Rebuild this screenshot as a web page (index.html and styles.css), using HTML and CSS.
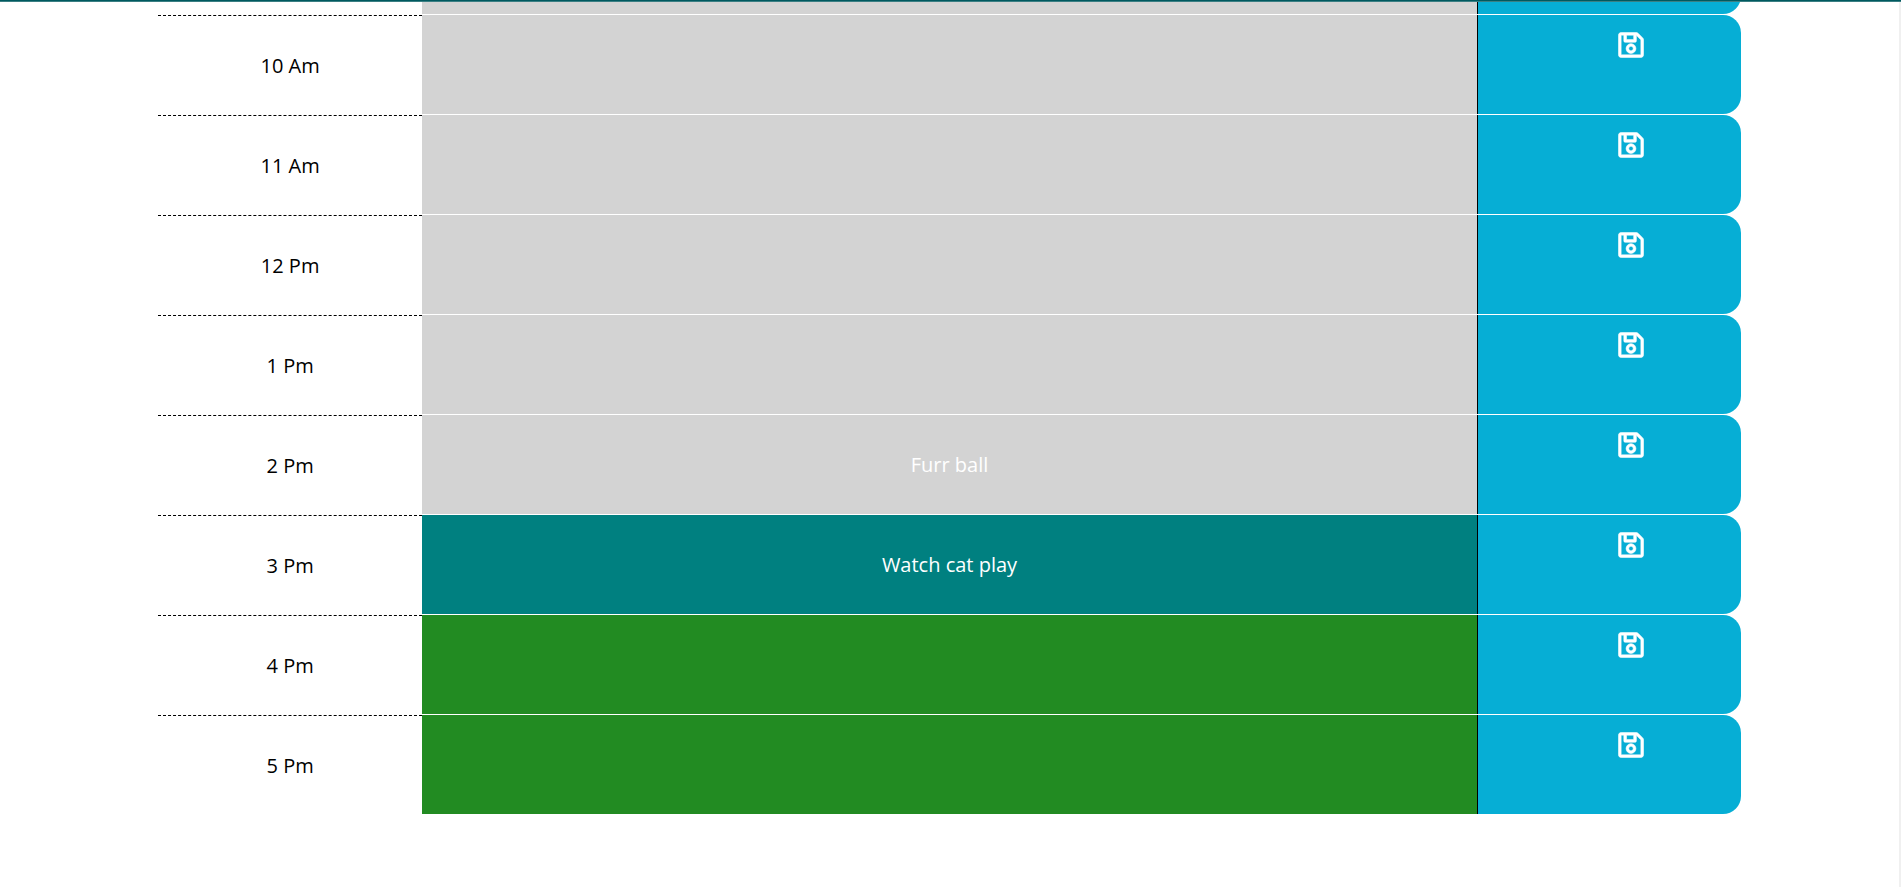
FILE: index.html
```html
<!DOCTYPE html>
<html lang="en">
<head>
<meta charset="utf-8">
<title>Work Day Scheduler</title>
<link rel="stylesheet" href="styles.css">
</head>
<body>
<svg class="sprite" aria-hidden="true">
  <symbol id="save" viewBox="-8 24 464 464">
    <path d="M433.941 129.941l-83.882-83.882A48 48 0 0 0 316.118 32H48C21.49 32 0 53.49 0 80v352c0 26.51 21.49 48 48 48h352c26.51 0 48-21.49 48-48V163.882a48 48 0 0 0-14.059-33.941zM272 80v80H144V80h128zm122 352H54a6 6 0 0 1-6-6V86a6 6 0 0 1 6-6h42v104c0 13.255 10.745 24 24 24h176c13.255 0 24-10.745 24-24V83.882l78.243 78.243a6 6 0 0 1 1.757 4.243V426a6 6 0 0 1-6 6zM224 232c-48.523 0-88 39.477-88 88s39.477 88 88 88 88-39.477 88-88-39.477-88-88-88zm0 128c-22.056 0-40-17.944-40-40s17.944-40 40-40 40 17.944 40 40-17.944 40-40 40z"/>
  </symbol>
</svg>
<header class="topbar"></header>
<main class="page">
  <div class="schedule">
    <div class="row row-clipped">
      <span class="hour"></span>
      <div class="task past"></div>
      <button class="save" type="button" aria-label="Save"></button>
    </div>
    <div class="row">
      <label class="hour" for="t10">10 Am</label>
      <textarea class="task past" id="t10"></textarea>
      <button class="save" type="button" aria-label="Save 10 Am"><svg class="icon"><use href="#save"/></svg></button>
    </div>
    <div class="row">
      <label class="hour" for="t11">11 Am</label>
      <textarea class="task past" id="t11"></textarea>
      <button class="save" type="button" aria-label="Save 11 Am"><svg class="icon"><use href="#save"/></svg></button>
    </div>
    <div class="row">
      <label class="hour" for="t12">12 Pm</label>
      <textarea class="task past" id="t12"></textarea>
      <button class="save" type="button" aria-label="Save 12 Pm"><svg class="icon"><use href="#save"/></svg></button>
    </div>
    <div class="row">
      <label class="hour" for="t13">1 Pm</label>
      <textarea class="task past" id="t13"></textarea>
      <button class="save" type="button" aria-label="Save 1 Pm"><svg class="icon"><use href="#save"/></svg></button>
    </div>
    <div class="row">
      <label class="hour" for="t14">2 Pm</label>
      <textarea class="task past" id="t14">Furr ball</textarea>
      <button class="save" type="button" aria-label="Save 2 Pm"><svg class="icon"><use href="#save"/></svg></button>
    </div>
    <div class="row">
      <label class="hour" for="t15">3 Pm</label>
      <textarea class="task present" id="t15">Watch cat play</textarea>
      <button class="save" type="button" aria-label="Save 3 Pm"><svg class="icon"><use href="#save"/></svg></button>
    </div>
    <div class="row">
      <label class="hour" for="t16">4 Pm</label>
      <textarea class="task future" id="t16"></textarea>
      <button class="save" type="button" aria-label="Save 4 Pm"><svg class="icon"><use href="#save"/></svg></button>
    </div>
    <div class="row">
      <label class="hour" for="t17">5 Pm</label>
      <textarea class="task future" id="t17"></textarea>
      <button class="save" type="button" aria-label="Save 5 Pm"><svg class="icon"><use href="#save"/></svg></button>
    </div>
  </div>
</main>
</body>
</html>
```
FILE: styles.css
```css
* {
  box-sizing: border-box;
}

body {
  display: flex;
  flex-direction: column;
  min-height: 100vh;
  margin: 0;
  background: #fff;
  font-family: "Open Sans", "Noto Sans", sans-serif;
  font-size: 20px;
  line-height: 28px;
}

.sprite {
  position: absolute;
  width: 0;
  height: 0;
}

.topbar {
  height: 2px;
  background: #00595f;
  border-bottom: 1px solid #3a7f83;
}

.page {
  flex: 1;
  border-right: 2px solid #f0f0f0;
}

.schedule {
  display: flex;
  flex-direction: column;
  gap: 1px;
  width: 83.3333%;
  margin: 0 auto;
}

.row {
  display: grid;
  grid-template-columns: 1fr 4fr 1fr;
  grid-auto-rows: 99px;
}

/* The row scrolled under the top bar shows only its lower edge. */
.row-clipped {
  height: 12px;
  align-content: end;
  overflow: hidden;
}

.hour {
  display: flex;
  align-items: center;
  justify-content: center;
  padding-top: 2px;
  border-top: 1px dashed #000;
  color: #000;
}

.task {
  display: block;
  width: 100%;
  height: 100%;
  margin: 0;
  padding: 36px 10px;
  border: 0;
  border-radius: 0;
  outline: 0;
  overflow: hidden;
  resize: none;
  color: #fff;
  font: inherit;
  text-align: center;
}

.past {
  background: #d3d3d3;
}

.present {
  background: #008080;
}

.future {
  background: #228b22;
}

.save {
  display: flex;
  align-items: flex-start;
  justify-content: center;
  margin: 0;
  padding: 17px 0 0 43px;
  border: 0;
  border-left: 1px solid #000;
  border-radius: 0 18px 18px 0;
  background: #06aed5;
  color: #fff;
  cursor: pointer;
}

.icon {
  width: 26px;
  height: 26px;
  fill: currentColor;
  stroke: currentColor;
  stroke-width: 10;
}
```
